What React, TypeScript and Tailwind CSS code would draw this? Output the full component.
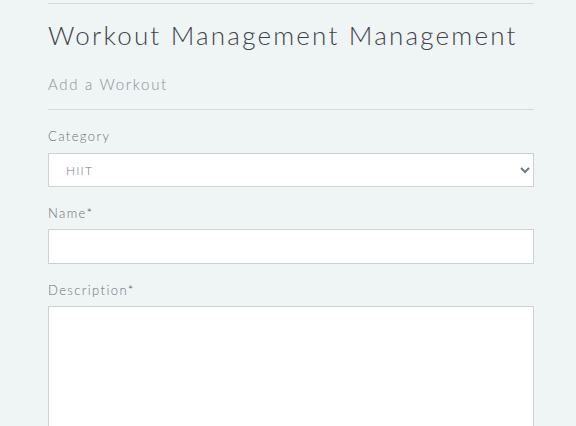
export default function App() {
  return (
    <div className="min-h-[426px] w-full bg-[#eff4f4] pl-12" style={{ fontFamily: 'Lato, "Noto Sans", sans-serif' }}>
      <div className="w-[486px] pt-[3px]">
        <hr className="border-t border-[#d4d9dc]" />
        <h1 className="mt-[16px] text-[26px] font-light leading-[30px] tracking-[2.2px] text-[#3f434a]">
          Workout Management Management
        </h1>
        <h2 className="mt-[24px] text-[15px] font-light leading-[20px] tracking-[1.7px] text-[#8a9099]">Add a Workout</h2>
        <hr className="mt-[15px] border-t border-[#d4d9dc]" />

        <form className="flex flex-col">
          <label className="mt-[17px] text-[13px] font-light leading-[18px] tracking-[1.4px] text-[#6b7078]">Category</label>
          <select className="mt-[8px] h-[34px] border border-[#ccd1d6] bg-white px-[13px] text-[12px] font-light tracking-[1.2px] text-[#6f7a8a]" defaultValue="HIIT">
            <option>HIIT</option>
          </select>

          <label className="mt-[17px] text-[13px] font-light leading-[18px] tracking-[1.4px] text-[#6b7078]">
            Name<span className="text-[#555]">*</span>
          </label>
          <input className="mt-[7px] h-[35px] border border-[#ccd1d6] bg-white" />

          <label className="mt-[17px] text-[13px] font-light leading-[18px] tracking-[1.4px] text-[#6b7078]">
            Description<span className="text-[#555]">*</span>
          </label>
          <textarea className="mt-[7px] h-[160px] resize-none border border-[#ccd1d6] bg-white" />
        </form>
      </div>
    </div>
  )
}
